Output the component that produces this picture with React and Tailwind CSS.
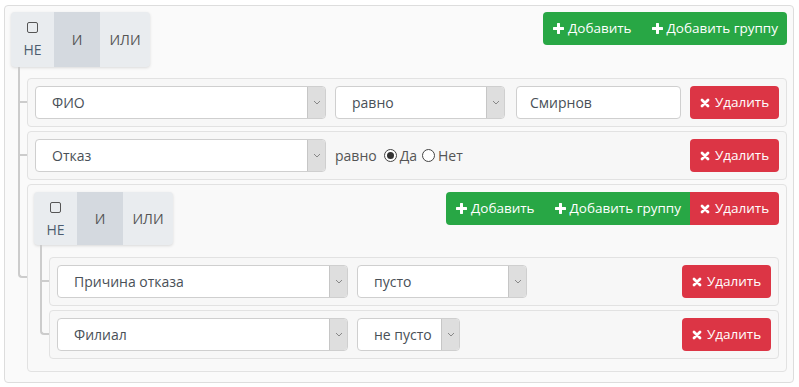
import { Fragment } from 'react';

function Chevron() {
  return (
    <svg width="8" height="5" viewBox="0 0 8 5" fill="none">
      <path d="M1 1l3 3 3-3" stroke="#888" strokeWidth="1" />
    </svg>
  );
}

function PlusIcon() {
  return (
    <svg width="11" height="11" viewBox="0 0 11 11">
      <path d="M5.5 1v9M1 5.5h9" stroke="white" strokeWidth="3" strokeLinecap="round" />
    </svg>
  );
}

function TimesIcon() {
  return (
    <svg width="10" height="10" viewBox="0 0 10 10">
      <path d="M2 2l6 6M8 2l-6 6" stroke="white" strokeWidth="2.8" strokeLinecap="round" />
    </svg>
  );
}

function Select({ width, text }) {
  return (
    <div className={`flex h-[33px] shrink-0 items-stretch rounded-[4px] border border-[#cfcfcf] bg-white ${width}`}>
      <span className="flex flex-1 items-center pl-[16px] text-[14px] text-[#495057]">{text}</span>
      <span className="flex w-[18px] items-center justify-center rounded-r-[3px] border-l border-[#c6c6c6] bg-[#dedede]">
        <Chevron />
      </span>
    </div>
  );
}

function DeleteButton() {
  return (
    <button className="flex h-[33px] w-[89px] shrink-0 items-center justify-center gap-[5px] rounded-[4px] bg-[#dc3545] text-[13.5px] text-white">
      <TimesIcon />
      Удалить
    </button>
  );
}

function Conditions({ height }) {
  return (
    <div className={`flex w-[139px] overflow-hidden rounded-[4px] bg-[#e9ecef] text-[14px] text-[#555] shadow-[0_1px_3px_rgba(0,0,0,0.13)] ${height}`}>
      <div className="flex w-[43px] flex-col items-center pt-[10px]">
        <span className="h-[11px] w-[11px] rounded-[2px] border border-[#555]" />
        <span className="mt-[10px] leading-none text-[#4d5d70]">НЕ</span>
      </div>
      <div className="flex w-[46px] items-center justify-center bg-[#d4d9df]">И</div>
      <div className="flex w-[50px] items-center justify-center">ИЛИ</div>
    </div>
  );
}

function GroupButtons({ withDelete }) {
  return (
    <div className="flex h-[33px] overflow-hidden rounded-[4px] text-[13.5px] text-white">
      <button className="flex items-center gap-[4px] bg-[#28a745] pl-[10px] pr-[10px]">
        <PlusIcon />
        Добавить
      </button>
      <button className="flex items-center gap-[4px] bg-[#28a745] pl-[10px] pr-[9px]">
        <PlusIcon />
        Добавить группу
      </button>
      {withDelete && (
        <button className="flex w-[89px] items-center justify-center gap-[5px] bg-[#dc3545]">
          <TimesIcon />
          Удалить
        </button>
      )}
    </div>
  );
}

function Branch({ first, last, firstTop, children }) {
  return (
    <div className="relative">
      <div
        className={`absolute left-[-9px] bottom-1/2 w-[9px] border-b-2 border-l-2 border-[#cccccc] ${
          first ? firstTop : 'top-[-4px]'
        } ${last ? 'rounded-bl-[4px]' : ''}`}
      />
      {!last && <div className="absolute left-[-9px] top-1/2 bottom-[-4px] border-l-2 border-[#cccccc]" />}
      {children}
    </div>
  );
}

function Rule({ children }) {
  return (
    <div className="flex h-[49px] items-center justify-between rounded-[4px] border border-[#e2e2e2] bg-[#f7f7f7] px-[7px]">
      <div className="flex items-center">{children}</div>
      <DeleteButton />
    </div>
  );
}

function Radio({ checked, label }) {
  return (
    <span className="flex items-center gap-[3px]">
      <span className="flex h-[13px] w-[13px] items-center justify-center rounded-full border border-[#444] bg-white">
        {checked && <span className="h-[7px] w-[7px] rounded-full bg-[#333]" />}
      </span>
      {label}
    </span>
  );
}

export default function App() {
  const nested = [
    { field: 'Причина отказа', op: 'пусто', opWidth: 'w-[170px]' },
    { field: 'Филиал', op: 'не пусто', opWidth: 'w-[103px]' },
  ];

  return (
    <div className="h-[387px] w-[799px] bg-white pl-[4px] pt-[5px] font-['Open_Sans',sans-serif]">
      <div className="w-[790px] rounded-[4px] border border-[#dddddd] bg-[#fafafa] px-[6px] pb-[10px] pt-[6px]">
        <div className="flex items-start justify-between">
          <Conditions height="h-[55px]" />
          <GroupButtons />
        </div>
        <div className="mt-[11px] flex flex-col gap-[4px] pl-[16px]">
          <Branch first firstTop="top-[-11px]">
            <Rule>
              <Select width="w-[291px]" text="ФИО" />
              <div className="ml-[9px]">
                <Select width="w-[170px]" text="равно" />
              </div>
              <div className="ml-[11px] flex h-[33px] w-[165px] items-center rounded-[4px] border border-[#cfcfcf] bg-white pl-[13px] text-[14px] text-[#495057]">
                Смирнов
              </div>
            </Rule>
          </Branch>
          <Branch>
            <Rule>
              <Select width="w-[291px]" text="Отказ" />
              <div className="ml-[9px] flex items-center gap-[7px] text-[14px] text-[#555]">
                <span>равно</span>
                <span className="flex items-center gap-[5px]">
                  <Radio checked label="Да" />
                  <Radio label="Нет" />
                </span>
              </div>
            </Rule>
          </Branch>
          <Branch last>
            <div className="rounded-[4px] border border-[#e2e2e2] bg-[#f9f9f9] pb-[12px] pl-[6px] pr-[7px] pt-[7px]">
              <div className="flex items-start justify-between">
                <Conditions height="h-[53px]" />
                <GroupButtons withDelete />
              </div>
              <div className="mt-[12px] flex flex-col gap-[4px] pl-[15px]">
                {nested.map((r, i) => (
                  <Fragment key={r.field}>
                    <Branch first={i === 0} last={i === nested.length - 1} firstTop="top-[-12px]">
                      <Rule>
                        <Select width="w-[291px]" text={r.field} />
                        <div className="ml-[9px]">
                          <Select width={r.opWidth} text={r.op} />
                        </div>
                      </Rule>
                    </Branch>
                  </Fragment>
                ))}
              </div>
            </div>
          </Branch>
        </div>
      </div>
    </div>
  );
}
